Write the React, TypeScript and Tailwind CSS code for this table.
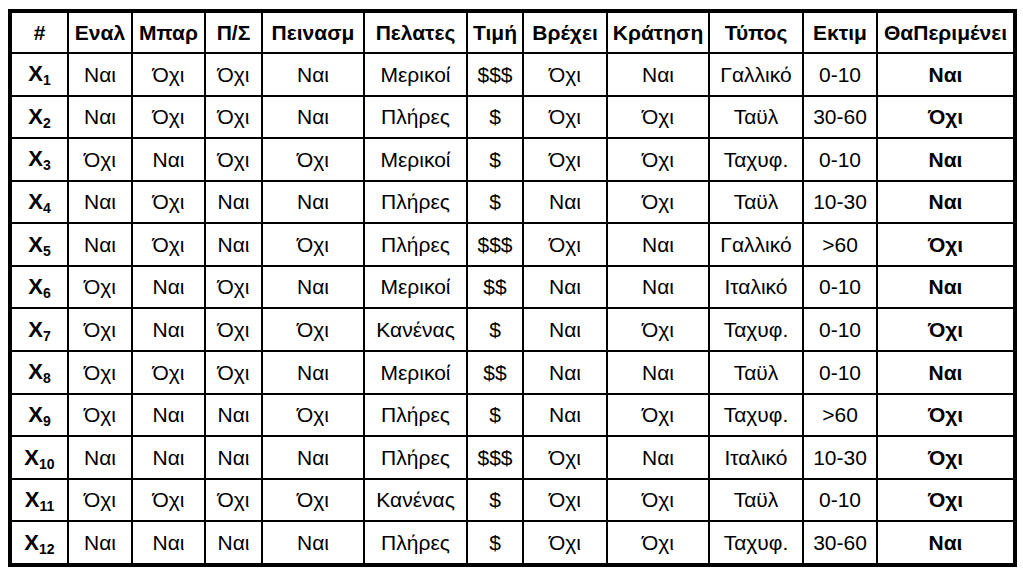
import React from 'react';

const headers = [
  '#',
  'Εναλ',
  'Μπαρ',
  'Π/Σ',
  'Πεινασμ',
  'Πελατες',
  'Τιμή',
  'Βρέχει',
  'Κράτηση',
  'Τύπος',
  'Εκτιμ',
  'ΘαΠεριμένει'
];

// κάθε γραμμή: τιμές στηλών 2..12
const rows: string[][] = [
  ['Ναι', 'Όχι', 'Όχι', 'Ναι', 'Μερικοί', '$$$', 'Όχι', 'Ναι', 'Γαλλικό', '0-10', 'Ναι'],
  ['Ναι', 'Όχι', 'Όχι', 'Ναι', 'Πλήρες', '$', 'Όχι', 'Όχι', 'Ταϋλ', '30-60', 'Όχι'],
  ['Όχι', 'Ναι', 'Όχι', 'Όχι', 'Μερικοί', '$', 'Όχι', 'Όχι', 'Ταχυφ.', '0-10', 'Ναι'],
  ['Ναι', 'Όχι', 'Ναι', 'Ναι', 'Πλήρες', '$', 'Ναι', 'Όχι', 'Ταϋλ', '10-30', 'Ναι'],
  ['Ναι', 'Όχι', 'Ναι', 'Όχι', 'Πλήρες', '$$$', 'Όχι', 'Ναι', 'Γαλλικό', '>60', 'Όχι'],
  ['Όχι', 'Ναι', 'Όχι', 'Ναι', 'Μερικοί', '$$', 'Ναι', 'Ναι', 'Ιταλικό', '0-10', 'Ναι'],
  ['Όχι', 'Ναι', 'Όχι', 'Όχι', 'Κανένας', '$', 'Ναι', 'Όχι', 'Ταχυφ.', '0-10', 'Όχι'],
  ['Όχι', 'Όχι', 'Όχι', 'Ναι', 'Μερικοί', '$$', 'Ναι', 'Ναι', 'Ταϋλ', '0-10', 'Ναι'],
  ['Όχι', 'Ναι', 'Ναι', 'Όχι', 'Πλήρες', '$', 'Ναι', 'Όχι', 'Ταχυφ.', '>60', 'Όχι'],
  ['Ναι', 'Ναι', 'Ναι', 'Ναι', 'Πλήρες', '$$$', 'Όχι', 'Ναι', 'Ιταλικό', '10-30', 'Όχι'],
  ['Όχι', 'Όχι', 'Όχι', 'Όχι', 'Κανένας', '$', 'Όχι', 'Όχι', 'Ταϋλ', '0-10', 'Όχι'],
  ['Ναι', 'Ναι', 'Ναι', 'Ναι', 'Πλήρες', '$', 'Όχι', 'Όχι', 'Ταχυφ.', '30-60', 'Ναι']
];

const cell = 'bg-white flex items-center justify-center whitespace-nowrap overflow-hidden';

export default function App() {
  return (
    <div className="w-[1023px] h-[571px] bg-white pt-[9px] pl-[8px] font-['Liberation_Sans',Arial,sans-serif] text-black">
      <div className="w-[1009px] h-[558px] bg-black p-[4px] grid gap-[2px] grid-cols-[55px_62px_71px_55px_100px_101px_54px_82px_100px_92px_72px_135px] grid-rows-[39px_repeat(12,minmax(0,1fr))]">
        {headers.map((h) => (
          <div key={h} className={`${cell} text-[21px] font-bold`}>
            {h}
          </div>
        ))}
        {rows.map((r, i) => (
          <React.Fragment key={i}>
            <div className={`${cell} font-bold`}>
              <span className="text-[22px] leading-none">X</span>
              <span className="text-[14px] leading-none translate-y-[6px]">{i + 1}</span>
            </div>
            {r.map((v, j) => (
              <div
                key={j}
                className={`${cell} text-[21px] ${j === r.length - 1 ? 'font-bold' : ''}`}
              >
                {v}
              </div>
            ))}
          </React.Fragment>
        ))}
      </div>
    </div>
  );
}
